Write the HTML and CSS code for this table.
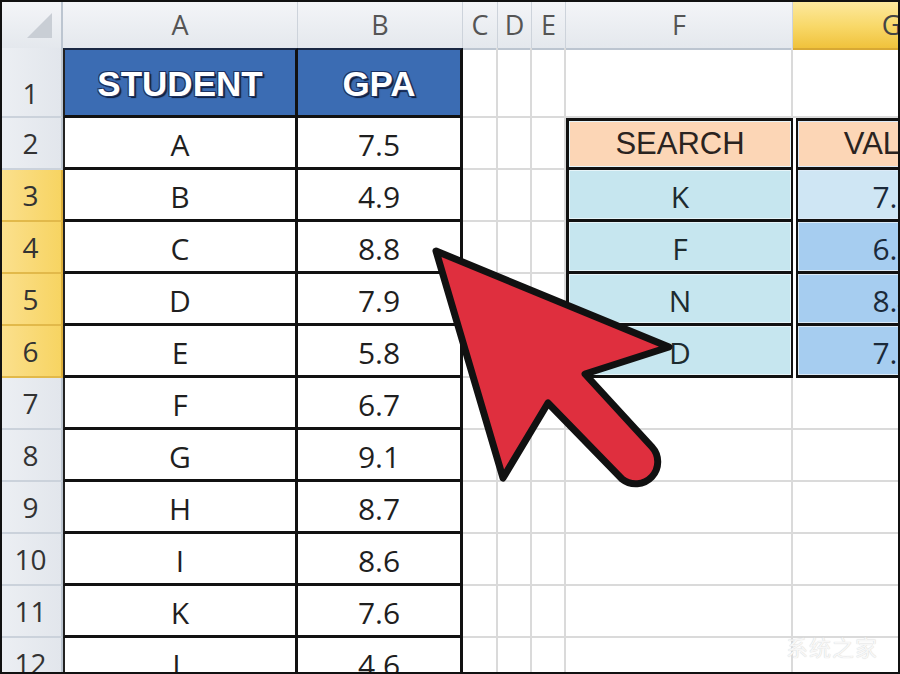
FILE: index.html
```html
<!DOCTYPE html>
<html lang="en">
	<head>
		<meta charset="UTF-8" />
		<meta name="viewport" content="width=device-width, initial-scale=1.0" />
		<title>GPA Lookup</title>
		<link rel="stylesheet" href="styles.css">
	</head>
	<body>
		<div class="sheet">
			<div class="row head">
				<div class="corner">
					<svg width="63" height="48" viewBox="0 0 63 48"><polygon points="27,38 52,38 52,13" fill="#c9ced5" /></svg>
				</div>
				<div class="colhead">A</div>
				<div class="colhead">B</div>
				<div class="colhead">C</div>
				<div class="colhead">D</div>
				<div class="colhead">E</div>
				<div class="colhead">F</div>
				<div class="colhead sel">G</div>
			</div>
			<div class="row r1">
				<div class="rowhead bottom">1</div>
				<div class="title first">STUDENT</div>
				<div class="title">GPA</div>
				<div></div><div></div><div></div><div></div><div></div>
			</div>
			<div class="row">
				<div class="rowhead">2</div>
				<div class="d first">A</div>
				<div class="d">7.5</div>
				<div></div><div></div><div></div>
				<div class="s hd">SEARCH</div>
				<div class="v hd">VALUE</div>
			</div>
			<div class="row">
				<div class="rowhead sel">3</div>
				<div class="d first">B</div>
				<div class="d">4.9</div>
				<div></div><div></div><div></div>
				<div class="s">K</div>
				<div class="v light">7.6</div>
			</div>
			<div class="row">
				<div class="rowhead sel">4</div>
				<div class="d first">C</div>
				<div class="d">8.8</div>
				<div></div><div></div><div></div>
				<div class="s">F</div>
				<div class="v">6.7</div>
			</div>
			<div class="row">
				<div class="rowhead sel">5</div>
				<div class="d first">D</div>
				<div class="d">7.9</div>
				<div></div><div></div><div></div>
				<div class="s">N</div>
				<div class="v">8.4</div>
			</div>
			<div class="row">
				<div class="rowhead sel">6</div>
				<div class="d first">E</div>
				<div class="d">5.8</div>
				<div></div><div></div><div></div>
				<div class="s">D</div>
				<div class="v">7.9</div>
			</div>
			<div class="row">
				<div class="rowhead">7</div>
				<div class="d first">F</div>
				<div class="d">6.7</div>
				<div></div><div></div><div></div><div></div><div></div>
			</div>
			<div class="row">
				<div class="rowhead">8</div>
				<div class="d first">G</div>
				<div class="d">9.1</div>
				<div></div><div></div><div></div><div></div><div></div>
			</div>
			<div class="row">
				<div class="rowhead">9</div>
				<div class="d first">H</div>
				<div class="d">8.7</div>
				<div></div><div></div><div></div><div></div><div></div>
			</div>
			<div class="row">
				<div class="rowhead">10</div>
				<div class="d first">I</div>
				<div class="d">8.6</div>
				<div></div><div></div><div></div><div></div><div></div>
			</div>
			<div class="row">
				<div class="rowhead">11</div>
				<div class="d first">K</div>
				<div class="d">7.6</div>
				<div></div><div></div><div></div><div></div><div></div>
			</div>
			<div class="row">
				<div class="rowhead">12</div>
				<div class="d first">L</div>
				<div class="d">4.6</div>
				<div></div><div></div><div></div><div></div><div></div>
			</div>

			<!-- big pointer drawn over the sheet -->
			<svg class="pointer" width="900" height="674" viewBox="0 0 900 674">
				<path d="M436 251 L669 347 L585 374 L652 447 A22 22 0 0 1 622 479 L548 403 L503 478 Z"
					fill="#df2f3e" stroke="#111" stroke-width="7" stroke-linejoin="round" />
			</svg>

			<div class="mark">系统之家</div>
		</div>
	</body>
</html>
```

FILE: styles.css
```css
body {
	margin: 0;
	background: #ffffff;
	font-family: 'Open Sans', 'Noto Sans CJK SC', sans-serif;
}
.sheet {
	position: relative;
	width: 900px;
	height: 674px;
	overflow: hidden;
	background: #ffffff;
}
.sheet::after {
	content: '';
	position: absolute;
	inset: 0;
	border: 2px solid #111;
	pointer-events: none;
}
.row {
	display: grid;
	grid-template-columns: 63px 235px 165px 35px 34px 34px 227px 198px;
	height: 52px;
}
.row.head {
	height: 48px;
}
.row.r1 {
	height: 70px;
}
.row > div {
	box-sizing: border-box;
	display: flex;
	align-items: center;
	justify-content: center;
	border-right: 2px solid #dadada;
	border-bottom: 2px solid #dadada;
	font-size: 30px;
	color: #222;
	padding-top: 4px;
}
.row > .corner,
.row > .colhead {
	background: linear-gradient(#f4f5f8, #e4e8ed);
	border-right: 1px solid #cdd3db;
	border-bottom: 2px solid #bcc5d0;
	color: #555;
	font-size: 27px;
	padding-top: 0;
}
.row > .corner {
	display: block;
	border-right: 2px solid #bcc5d0;
}
.corner svg {
	display: block;
}
.row > .colhead.sel {
	background: linear-gradient(#fdeaa2, #f8d868 55%, #f0c23c);
	border-bottom-color: #d8a834;
	color: #444;
}
.row > .rowhead {
	background: linear-gradient(90deg, #eceff3, #e2e6ec);
	border-right: 2px solid #bcc5d0;
	border-bottom: 2px solid #cbd2db;
	color: #333;
	font-size: 28px;
	padding-top: 0;
}
.row > .rowhead.bottom {
	align-items: flex-end;
	padding-bottom: 4px;
}
.row > .rowhead.sel {
	background: linear-gradient(90deg, #fbe08e, #f7d462);
	border-bottom-color: #e2b94a;
	border-right-color: #dcae3a;
}
.row > .title {
	background: #3b6cb3;
	border-top: 2px solid #1a2844;
	border-right: 3px solid #111;
	border-bottom: 3px solid #111;
	font-family: 'Liberation Sans', sans-serif;
	font-weight: bold;
	font-size: 35px;
	color: #ffffff;
	text-shadow: -1px -1px 0 #1c3262, 1px -1px 0 #1c3262, -1px 1px 0 #1c3262,
		1px 1px 0 #1c3262, 2px 2px 1px #0e1b36;
	padding-top: 2px;
}
.row > .first {
	border-left: 2px solid #222;
}
.row > .d {
	border-right: 3px solid #111;
	border-bottom: 3px solid #111;
	color: #1f1f1f;
}
.row > .s {
	background: #c6e6ef;
	border-left: 3px solid #111;
	border-right: 2px solid #111;
	border-bottom: 3px solid #111;
	box-shadow: inset 0 0 0 1px #e6f4f8;
	color: #1d2b2f;
}
.row > .v {
	margin-left: 3px;
	background: #a6cdf0;
	border-left: 2px solid #111;
	border-right: 2px solid #111;
	border-bottom: 3px solid #111;
	box-shadow: inset 0 0 0 1px #dbeaf7;
	color: #1b2a3a;
}
.row > .v.light {
	background: #cfe6f4;
}
.row > .hd {
	background: #fcd6b6;
	border-top: 3px solid #111;
	font-family: 'Liberation Sans', sans-serif;
	font-size: 31px;
	color: #2a2320;
	padding-top: 0;
}
.pointer {
	position: absolute;
	left: 0;
	top: 0;
	pointer-events: none;
}
.mark {
	position: absolute;
	right: 22px;
	bottom: 12px;
	font-size: 22px;
	color: #f7f7f7;
	text-shadow: 0 0 1px #c8c8c8;
	letter-spacing: 1px;
}
```
